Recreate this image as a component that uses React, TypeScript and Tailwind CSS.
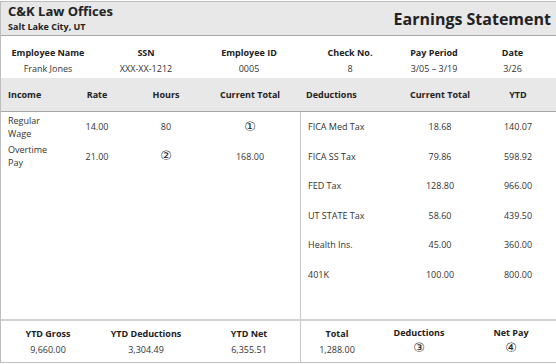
const info = [
  { label: "Employee Name", value: "Frank Jones" },
  { label: "SSN", value: "XXX-XX-1212" },
  { label: "Employee ID", value: "0005" },
  { label: "Check No.", value: "8" },
  { label: "Pay Period", value: "3/05 – 3/19" },
  { label: "Date", value: "3/26" },
]

const income = [
  { name: "Regular Wage", rate: "14.00", hours: "80", total: "①" },
  { name: "Overtime Pay", rate: "21.00", hours: "②", total: "168.00" },
]

const deductions = [
  { name: "FICA Med Tax", current: "18.68", ytd: "140.07" },
  { name: "FICA SS Tax", current: "79.86", ytd: "598.92" },
  { name: "FED Tax", current: "128.80", ytd: "966.00" },
  { name: "UT STATE Tax", current: "58.60", ytd: "439.50" },
  { name: "Health Ins.", current: "45.00", ytd: "360.00" },
  { name: "401K", current: "100.00", ytd: "800.00" },
]

function Circled({ n }: { n: string }) {
  return <span className="font-['DejaVu_Sans'] text-[13px] leading-[14px] text-[#222]">{n}</span>
}

function isCircled(v: string) {
  return "①②③④".includes(v)
}

export default function App() {
  return (
    <div className="w-[556px] h-[364px] bg-white pt-px font-['Open_Sans',sans-serif] text-[#222]">
      <div className="flex h-[362px] flex-col border border-r-0 border-[#bdbdbd]">
        {/* Title band */}
        <div className="flex h-[34px] shrink-0 items-center justify-between border-b border-[#a9a9a9] bg-[#e8e8e8] pl-[7px] pr-[5px]">
          <div className="flex flex-col gap-[1.5px]">
            <span className="text-[13px] font-bold leading-[15px]">C&amp;K Law Offices</span>
            <span className="text-[9px] font-bold leading-[12px]">Salt Lake City, UT</span>
          </div>
          <span className="text-[16px] font-bold leading-none">Earnings Statement</span>
        </div>

        {/* Employee info */}
        <div className="grid h-[42px] shrink-0 grid-cols-[94px_102px_104px_98px_70px_87px] items-center">
          {info.map((item) => (
            <div key={item.label} className="flex flex-col items-center pt-[8px]">
              <span className="text-[9px] font-bold leading-[16px]">{item.label}</span>
              <span className="text-[9px] leading-[16px] text-[#333]">{item.value}</span>
            </div>
          ))}
        </div>

        {/* Table header */}
        <div className="flex h-[34px] shrink-0 border-b border-[#a9a9a9] bg-[#e8e8e8] text-[9px] font-bold">
          <div className="grid w-[300px] grid-cols-[66px_60px_78px_90px] items-center">
            <span className="pl-[7px]">Income</span>
            <span className="text-center">Rate</span>
            <span className="text-center">Hours</span>
            <span className="text-center">Current Total</span>
          </div>
          <div className="grid flex-1 grid-cols-[94px_90px_66px] items-center">
            <span className="pl-[5px]">Deductions</span>
            <span className="text-center">Current Total</span>
            <span className="text-center">YTD</span>
          </div>
        </div>

        {/* Body */}
        <div className="flex flex-1 text-[9px] text-[#333]">
          <div className="w-[300px] border-r border-[#c8c8c8]">
            {income.map((row) => (
              <div key={row.name} className="grid h-[29.5px] grid-cols-[66px_60px_78px_90px] items-center">
                <span className="pl-[7px] pr-[12px] leading-[13px]">{row.name}</span>
                <span className="text-center">{row.rate}</span>
                <span className="text-center">{isCircled(row.hours) ? <Circled n={row.hours} /> : row.hours}</span>
                <span className="text-center">{isCircled(row.total) ? <Circled n={row.total} /> : row.total}</span>
              </div>
            ))}
          </div>
          <div className="flex-1">
            {deductions.map((row) => (
              <div key={row.name} className="grid h-[29.5px] grid-cols-[94px_90px_66px] items-center">
                <span className="pl-[7px]">{row.name}</span>
                <span className="text-center">{row.current}</span>
                <span className="text-center">{row.ytd}</span>
              </div>
            ))}
          </div>
        </div>

        {/* Totals */}
        <div className="flex h-[43px] shrink-0 border-t-2 border-[#d2d2d2] text-[9px]">
          <div className="grid w-[300px] grid-cols-[94px_102px_104px] items-center border-r border-[#c8c8c8]">
            {[
              ["YTD Gross", "9,660.00"],
              ["YTD Deductions", "3,304.49"],
              ["YTD Net", "6,355.51"],
            ].map(([label, value]) => (
              <div key={label} className="flex flex-col items-center">
                <span className="font-bold leading-[16px]">{label}</span>
                <span className="leading-[16px] text-[#333]">{value}</span>
              </div>
            ))}
          </div>
          <div className="grid flex-1 grid-cols-[72px_92px_92px] items-center">
            <div className="flex flex-col items-center">
              <span className="font-bold leading-[16px]">Total</span>
              <span className="leading-[16px] text-[#333]">1,288.00</span>
            </div>
            <div className="flex flex-col items-center pb-[3px]">
              <span className="font-bold leading-[16px]">Deductions</span>
              <Circled n="③" />
            </div>
            <div className="flex flex-col items-center pb-[3px]">
              <span className="font-bold leading-[16px]">Net Pay</span>
              <Circled n="④" />
            </div>
          </div>
        </div>
      </div>
    </div>
  )
}
